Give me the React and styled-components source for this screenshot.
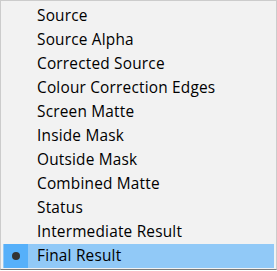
import React from "react";
import styled, { createGlobalStyle } from "styled-components";

const Global = createGlobalStyle`
  html, body { margin: 0; padding: 0; background: #ffffff; }
  body { font-family: "Open Sans", "Noto Sans", sans-serif; }
`;

const Menu = styled.ul`
  list-style: none;
  margin: 0;
  width: 277px;
  box-sizing: border-box;
  padding: 3px 2px 1px 2px;
  background: #f2f2f2;
  border: 1px solid #cccccc;
  border-bottom-color: #7a7a7a;
`;

const Item = styled.li`
  display: flex;
  align-items: center;
  height: 24px;
  background: ${(p) => (p.$selected ? "#91c9f7" : "transparent")};
  color: #000;
  font-size: 15.4px;
  letter-spacing: 0.2px;
  line-height: 24px;
`;

const Gutter = styled.span`
  display: flex;
  align-items: center;
  justify-content: center;
  width: 24px;
  height: 100%;
  margin-left: 1px;
  background: ${(p) => (p.$selected ? "#56b0fa" : "transparent")};
`;

const Bullet = styled.span`
  width: 8px;
  height: 8px;
  border-radius: 50%;
  background: #333333;
`;

const Label = styled.span`
  margin-left: 9px;
  white-space: nowrap;
`;

const items = [
  "Source",
  "Source Alpha",
  "Corrected Source",
  "Colour Correction Edges",
  "Screen Matte",
  "Inside Mask",
  "Outside Mask",
  "Combined Matte",
  "Status",
  "Intermediate Result",
  "Final Result",
];

export default function App() {
  return (
    <>
      <Global />
      <Menu>
        {items.map((t) => {
          const sel = t === "Final Result";
          return (
            <Item key={t} $selected={sel}>
              <Gutter $selected={sel}>{sel && <Bullet />}</Gutter>
              <Label>{t}</Label>
            </Item>
          );
        })}
      </Menu>
    </>
  );
}
